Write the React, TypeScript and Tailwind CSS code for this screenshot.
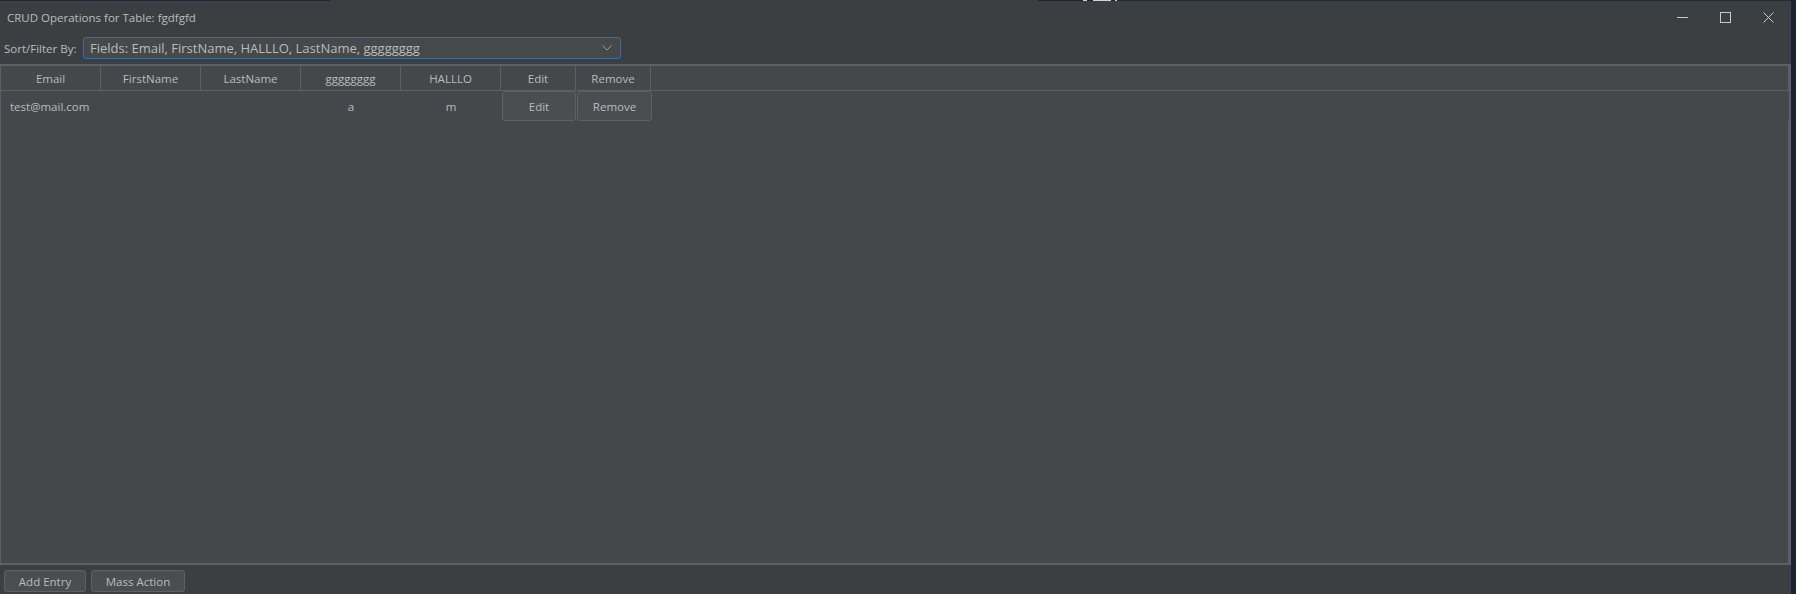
import React from 'react';

const FONT = "font-['Open_Sans',sans-serif]";

const columns = [
  {label: 'Email', w: 'w-[100px]'},
  {label: 'FirstName', w: 'w-[100px]'},
  {label: 'LastName', w: 'w-[100px]'},
  {label: 'gggggggg', w: 'w-[100px]'},
  {label: 'HALLLO', w: 'w-[100px]'},
  {label: 'Edit', w: 'w-[75px]'},
  {label: 'Remove', w: 'w-[75px]'},
];

const WinButton: React.FC<{children: React.ReactNode}> = ({children}) => (
  <div className="w-[43px] h-[31px] flex items-center justify-center text-[#c8c8c8]">
    {children}
  </div>
);

export default function App() {
  return (
    <div className={`w-[1796px] h-[594px] flex bg-[#1d2430] text-[11.5px] text-[#bbbbbb] ${FONT}`}>
      <div className="w-[1791px] h-full flex flex-col bg-[#3c3f41]">
        {/* top edge remnants */}
        <div className="h-px flex shrink-0">
          <div className="w-[330px] bg-[#232634]" />
          <div className="w-[708px] bg-[#3c3f41]" />
          <div className="w-[45px] bg-[#1f2433]" />
          <div className="w-[4px] bg-[#cfd2d6]" />
          <div className="w-[6px] bg-[#1f2433]" />
          <div className="w-[18px] bg-[#cfd2d6]" />
          <div className="w-[4px] bg-[#1f2433]" />
          <div className="w-[2px] bg-[#cfd2d6]" />
          <div className="flex-1 bg-[#1f2a32]" />
        </div>

        {/* title bar */}
        <div className="h-[32px] shrink-0 flex items-center">
          <span className="pl-[7px] pt-[1px] text-[#bcbcbc]">CRUD Operations for Table: fgdfgfd</span>
          <div className="ml-auto flex pr-[1px]">
            <WinButton>
              <svg width="11" height="11" viewBox="0 0 11 11"><path d="M0 5.5h11" stroke="currentColor" strokeWidth="1" /></svg>
            </WinButton>
            <WinButton>
              <svg width="11" height="11" viewBox="0 0 11 11"><rect x="0.5" y="0.5" width="10" height="10" fill="none" stroke="currentColor" strokeWidth="1" /></svg>
            </WinButton>
            <WinButton>
              <svg width="11" height="11" viewBox="0 0 11 11"><path d="M0.5 0.5l10 10M10.5 0.5l-10 10" stroke="currentColor" strokeWidth="1" /></svg>
            </WinButton>
          </div>
        </div>

        {/* sort / filter row */}
        <div className="h-[22px] mt-[4px] shrink-0 flex items-center">
          <span className="pl-[4px] pt-[1px] w-[83px]">Sort/Filter By:</span>
          <div className="w-[538px] h-[22px] border border-[#3f6e9c] rounded-[2px] bg-[#45494a] flex items-center pl-[6px] pr-[6px]">
            <span className="pt-[1px] text-[13px] text-[#bbbbbb]">Fields: Email, FirstName, HALLLO, LastName, gggggggg</span>
            <svg className="ml-auto mr-[2px]" width="10" height="6" viewBox="0 0 10 6">
              <path d="M0.5 0.5l4.5 4.5 4.5-4.5" fill="none" stroke="#9a9c9e" strokeWidth="1" />
            </svg>
          </div>
        </div>

        {/* table */}
        <div className="mt-[5px] h-[501px] shrink-0 border-t-2 border-l border-r-2 border-b-2 border-[#5d6062] bg-[#45484a] flex flex-col">
          <div className="h-[25px] flex border-b border-[#5d6062] border-r border-r-[#5d6062]">
            {columns.map((c) => (
              <div key={c.label} className={`${c.w} h-full border-r border-[#5d6062] flex items-center justify-center pt-[1px]`}>
                {c.label}
              </div>
            ))}
          </div>
          <div className="h-[30px] flex">
            <div className="w-[100px] flex items-center pl-[9px] pt-[1px]">test@mail.com</div>
            <div className="w-[100px]" />
            <div className="w-[100px]" />
            <div className="w-[100px] flex items-center justify-center pt-[1px]">a</div>
            <div className="w-[100px] flex items-center justify-center pt-[1px]">m</div>
            <div className="w-[75px] pl-[1px]">
              <div className="h-full border border-[#5e6163] rounded-[3px] bg-[#4b4e50] flex items-center justify-center pt-[1px]">Edit</div>
            </div>
            <div className="w-[76px] pl-[1px]">
              <div className="h-full border border-[#5e6163] rounded-[3px] bg-[#4b4e50] flex items-center justify-center pt-[1px]">Remove</div>
            </div>
          </div>
          <div className="flex-1 border-r border-[#5d6062]" />
        </div>

        {/* bottom buttons */}
        <div className="mt-[5px] pl-[4px] flex gap-[5px]">
          <button className="w-[82px] h-[22px] border border-[#5e6163] rounded-[3px] bg-[#4b4e50] text-[#bbbbbb] pt-[1px]">Add Entry</button>
          <button className="w-[94px] h-[22px] border border-[#5e6163] rounded-[3px] bg-[#4b4e50] text-[#bbbbbb] pt-[1px]">Mass Action</button>
        </div>
      </div>
      <div className="w-[5px] h-full bg-[#1d2430]" />
    </div>
  );
}
